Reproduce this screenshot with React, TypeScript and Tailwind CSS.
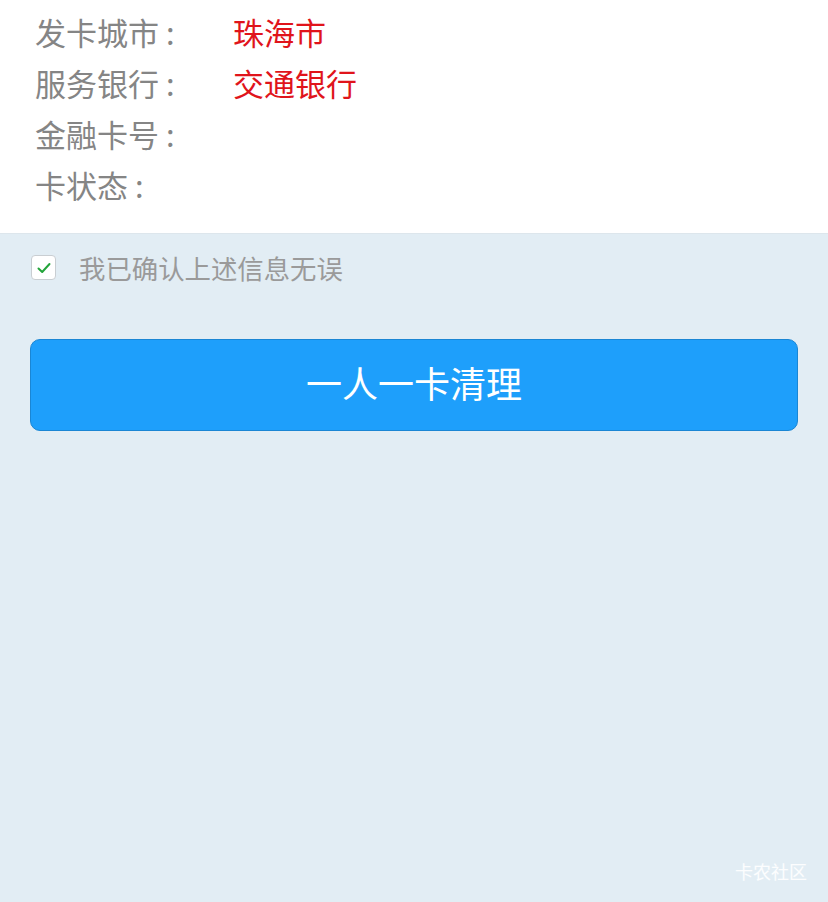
import React from "react";

const rows = [
    { label: "发卡城市", value: "珠海市" },
    { label: "服务银行", value: "交通银行" },
    { label: "金融卡号", value: "" },
    { label: "卡状态", value: "" },
];

const font = { fontFamily: '"Noto Sans CJK SC", "Noto Sans", sans-serif' };

export default function App() {
    return (
        <div className="w-[828px] h-[902px] bg-[#e2edf4] flex flex-col relative" style={font}>
            {/* Card info */}
            <div className="bg-white h-[234px] pl-[35px] pt-[6px] border-b border-[#dde6ec]">
                {rows.map((row) => (
                    <div key={row.label} className="flex items-center h-[51px] text-[31px] leading-none">
                        <span className="w-[198px] text-[#858585]">
                            {row.label}
                            <span className="ml-[7px]">:</span>
                        </span>
                        <span className="text-[#e0141b]">{row.value}</span>
                    </div>
                ))}
            </div>

            {/* Confirm */}
            <div className="flex items-center pl-[31px] pt-[21px]">
                <div className="w-[25px] h-[25px] bg-white border border-[#c9ced2] rounded-[4px] flex items-center justify-center">
                    <svg width="16" height="16" viewBox="0 0 16 16" fill="none">
                        <path d="M2.5 8.5 L6.2 12 L13.5 4" stroke="#22a43a" strokeWidth="2" strokeLinecap="round" strokeLinejoin="round" />
                    </svg>
                </div>
                <span className="ml-[23px] text-[26.4px] leading-[25px] text-[#9a9a9a]">我已确认上述信息无误</span>
            </div>

            {/* Action */}
            <div className="px-[30px] pt-[59px]">
                <button className="w-full h-[92px] pb-[7px] rounded-[10px] bg-[#1e9ffb] border border-[#1a86d4] text-white text-[36px] leading-none">
                    一人一卡清理
                </button>
            </div>

            <span className="absolute right-[21px] bottom-[22px] text-[18px] leading-none text-white/90">卡农社区</span>
        </div>
    );
}
